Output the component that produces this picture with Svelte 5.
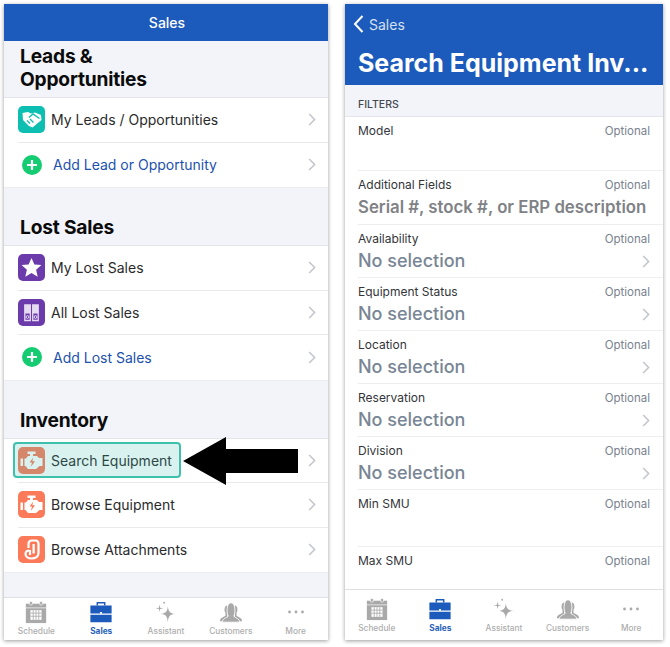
<script>
  const leads = [{ icon: 'shake', label: 'My Leads / Opportunities' }, { add: true, label: 'Add Lead or Opportunity' }];
  const lost = [
    { icon: 'star', label: 'My Lost Sales' },
    { icon: 'binders', label: 'All Lost Sales' },
    { add: true, label: 'Add Lost Sales' }
  ];
  const inventory = [
    { icon: 'engine', label: 'Search Equipment', marked: true },
    { icon: 'engine', label: 'Browse Equipment' },
    { icon: 'hook', label: 'Browse Attachments' }
  ];
  const filters = [
    { label: 'Model', cls: 'plain' },
    { label: 'Additional Fields', value: 'Serial #, stock #, or ERP description', cls: 'plain wide' },
    { label: 'Availability', value: 'No selection', pick: true },
    { label: 'Equipment Status', value: 'No selection', pick: true },
    { label: 'Location', value: 'No selection', pick: true },
    { label: 'Reservation', value: 'No selection', pick: true },
    { label: 'Division', value: 'No selection', pick: true },
    { label: 'Min SMU', cls: 'tall' },
    { label: 'Max SMU', cls: 'last' }
  ];
  const tabs = ['Schedule', 'Sales', 'Assistant', 'Customers', 'More'];
</script>

{#snippet chevron()}
  <svg class="chev" width="8" height="13" viewBox="0 0 8 13"><path d="M1.2 1 L6.6 6.5 L1.2 12" fill="none" stroke="#c3c6cc" stroke-width="1.6" /></svg>
{/snippet}

{#snippet appIcon(name)}
  <span class="app-icon {name}">
    <svg width="27" height="27" viewBox="0 0 27 27">
      {#if name === 'shake'}
        <path d="M4.5 7 L10 6 L13 7.5 L17 6.5 L23 9 L23.5 14 L14.5 21.5 L11 20 L5 14 Z" fill="#fff" />
        <path d="M11 11.5 L15 8 L21.5 12.5 M9 14.5 L12 17.5 M12 13 L15.5 16.5" fill="none" stroke="#0dbfb0" stroke-width="1.4" />
      {:else if name === 'star'}
        <path d="M13.5 4 L16.4 10.4 L23.4 11.1 L18.1 15.8 L19.7 22.8 L13.5 19.1 L7.3 22.8 L8.9 15.8 L3.6 11.1 L10.6 10.4 Z" fill="#fff" />
      {:else if name === 'binders'}
        <path d="M6.8 6 H12.3 V21.5 H6.8 Z M14.7 6 H20.2 V21.5 H14.7 Z" fill="none" stroke="#e6dcf2" stroke-width="1.3" />
        <path d="M6.8 6 H12.3 V14.5 H6.8 Z M14.7 6 H20.2 V14.5 H14.7 Z" fill="#e6dcf2" />
        <circle cx="9.5" cy="18" r="1.4" fill="none" stroke="#e6dcf2" />
        <circle cx="17.5" cy="18" r="1.4" fill="none" stroke="#e6dcf2" />
      {:else if name === 'engine'}
        <path d="M9.5 4.5 H17.5 V7 H15 V9 H19 L21 11 H24.5 V19 H21.5 L18 22 H10 L7.5 19 H6.5 V11.5 H8 L10 9 H12 V7 H9.5 Z" fill="#fff" />
        <path d="M2.5 11.5 H5 V19 H2.5 Z" fill="#fff" />
        <path d="M15.2 10.5 L11.5 15.5 H14 L12.8 20 L17 14.2 H14.3 Z" fill="currentColor" />
      {:else}
        <path d="M10.5 12 V8 C10.5 5.5 12 4.5 14 4.5 H17.5 C19.5 4.5 20.5 6 20.5 8 V17 C20.5 20.5 17.5 22.5 13.5 22.5 C10 22.5 7.5 20.5 7.5 18 C7.5 15.5 9.5 14 12 15 V19" fill="none" stroke="#fff" stroke-width="2.2" />
        <path d="M14.5 8 H16.8 V17.5 H14.5 Z" fill="#fff" />
      {/if}
    </svg>
  </span>
{/snippet}

{#snippet section(title, rows)}
  <h2>{title}</h2>
  <ul class="list">
    {#each rows as row}
      <li class="row">
        <div class="row-inner" class:is-add={row.add}>
          {#if row.add}
            <span class="plus"><svg width="20" height="20" viewBox="0 0 20 20"><circle cx="10" cy="10" r="10" fill="#16cc72" /><path d="M10 5 V15 M5 10 H15" stroke="#fff" stroke-width="2.2" /></svg></span>
          {:else}
            {@render appIcon(row.icon)}
          {/if}
          <span class="row-label">{row.label}</span>
          {@render chevron()}
        </div>
        {#if row.marked}
          <span class="mark"></span>
          <svg class="arrow" width="116" height="48" viewBox="0 0 116 48"><path d="M0 24 L43 0 V12 H115 V36 H43 V48 Z" fill="#000" /></svg>
        {/if}
      </li>
    {/each}
  </ul>
{/snippet}

{#snippet tabbar()}
  <nav class="tabs">
    {#each tabs as tab}
      <div class="tab" class:active={tab === 'Sales'}>
        <svg width="26" height="26" viewBox="0 0 26 26">
          {#if tab === 'Schedule'}
            <path d="M2 4 H24 V25 H2 Z" fill="#a9a9a9" />
            <rect x="6" y="1.5" width="3" height="4" rx="1.2" fill="#a9a9a9" stroke="#fff" stroke-width=".7" />
            <rect x="17" y="1.5" width="3" height="4" rx="1.2" fill="#a9a9a9" stroke="#fff" stroke-width=".7" />
            <path d="M2 8.5 H24" stroke="#fff" stroke-width=".7" />
            <path d="M7 11 H19 V21.5 H7 Z" fill="#fff" />
            <path d="M7 14.2 H19 M7 17.6 H19 M10 11 V21.5 M13 11 V21.5 M16 11 V21.5" stroke="#a9a9a9" stroke-width=".9" />
          {:else if tab === 'Sales'}
            <path d="M9 6 V3 H17 V6" fill="none" stroke="#1c5bbc" stroke-width="1.6" />
            <path d="M1.5 6 H24.5 V14.5 H1.5 Z M1.5 16 H24.5 V24 H1.5 Z" fill="#1c5bbc" />
            <rect x="12" y="13" width="2" height="2" fill="#fff" />
          {:else if tab === 'Assistant'}
            <path d="M15 7 C15.6 12.5 17.5 14.5 23 15 C17.5 15.6 15.6 17.5 15 24 C14.4 17.5 12.5 15.6 7 15 C12.5 14.5 14.4 12.5 15 7 Z" fill="#a9a9a9" />
            <path d="M6 5 L6.7 8.3 L10 9 L6.7 9.7 L6 13 L5.3 9.7 L2 9 L5.3 8.3 Z" fill="#a9a9a9" />
            <circle cx="11" cy="3" r="1" fill="#a9a9a9" />
          {:else if tab === 'Customers'}
            <path d="M1 23 C1 19 5 18.5 7 17 L7 14 C5.5 12 5.5 6 9 6 L9 20 L9 23 Z M25 23 C25 19 21 18.5 19 17 L19 14 C20.5 12 20.5 6 17 6 L17 23 Z" fill="#a9a9a9" />
            <path d="M3.5 24 C3.5 20 8.5 19.5 10 17.5 C8 14.5 8 3 13 3 C18 3 18 14.5 16 17.5 C17.5 19.5 22.5 20 22.5 24 Z" fill="#a9a9a9" stroke="#fff" stroke-width=".9" />
          {:else}
            <circle cx="6" cy="13" r="1.5" fill="#a9a9a9" />
            <circle cx="13" cy="13" r="1.5" fill="#a9a9a9" />
            <circle cx="20" cy="13" r="1.5" fill="#a9a9a9" />
          {/if}
        </svg>
        <span>{tab}</span>
      </div>
    {/each}
  </nav>
{/snippet}

<div class="page">
  <section class="phone">
    <header class="bar">Sales</header>
    <div class="body">
      <div class="group first">{@render section('Leads & Opportunities', leads)}</div>
      <div class="group">{@render section('Lost Sales', lost)}</div>
      <div class="group">{@render section('Inventory', inventory)}</div>
    </div>
    {@render tabbar()}
  </section>

  <section class="phone right">
    <header class="bar-large">
      <div class="back">
        <svg width="11" height="18" viewBox="0 0 11 18"><path d="M9.5 1 L2 9 L9.5 17" fill="none" stroke="#fff" stroke-width="2" /></svg>
        <span>Sales</span>
      </div>
      <h1>Search Equipment Inv...</h1>
    </header>
    <div class="body form">
      <div class="filters-title">FILTERS</div>
      <ul class="fields">
        {#each filters as f}
          <li class="field {f.cls ?? ''}">
            <div class="field-top"><span>{f.label}</span><span class="opt">Optional</span></div>
            {#if f.value}
              <div class="field-value"><span>{f.value}</span>{#if f.pick}{@render chevron()}{/if}</div>
            {/if}
          </li>
        {/each}
      </ul>
    </div>
    {@render tabbar()}
  </section>
</div>

<style>
  :global(body) {
    margin: 0;
    background: #fff;
  }

  ul {
    list-style: none;
    margin: 0;
    padding: 0;
  }

  .page {
    display: flex;
    gap: 17px;
    padding: 4px 7px 7px 4px;
    width: 670px;
    height: 647px;
    box-sizing: border-box;
    font-family: Inter, "Liberation Sans", sans-serif;
    overflow: hidden;
  }

  .phone {
    width: 324px;
    display: flex;
    flex-direction: column;
    background: #f2f4fa;
    box-shadow: 0 1px 4px rgba(0, 0, 0, 0.4);
  }

  .phone.right {
    width: 318px;
    background: #fff;
  }

  .bar {
    height: 37px;
    flex: none;
    background: #1c5bbc;
    color: #fff;
    font-size: 14px;
    font-weight: 500;
    display: flex;
    align-items: center;
    justify-content: center;
    padding-left: 2px;
  }

  .body {
    flex: 1;
    min-height: 0;
  }

  .group {
    padding-top: 28px;
  }

  .group.first {
    padding-top: 4px;
  }

  h2 {
    margin: 0;
    padding: 0 120px 6px 16px;
    font-size: 19.2px;
    line-height: 23px;
    font-weight: 700;
    color: #0b0b0b;
    letter-spacing: -0.2px;
  }

  .list {
    background: #fff;
    border-top: 1px solid #e4e5ea;
    border-bottom: 1px solid #ebecf0;
  }

  .row {
    position: relative;
    height: 44.5px;
    padding-left: 14px;
  }

  .row-inner {
    display: flex;
    align-items: center;
    height: 100%;
    box-sizing: border-box;
    border-bottom: 1px solid #eaeaec;
    padding-right: 12px;
  }

  .row:last-child .row-inner {
    border-bottom: none;
  }

  .app-icon {
    width: 27px;
    height: 27px;
    border-radius: 5px;
    flex: none;
    margin-right: 6px;
    display: block;
  }

  .app-icon svg {
    display: block;
  }

  .shake {
    background: #0dbfb0;
  }

  .star,
  .binders {
    background: #6c3bab;
  }

  .engine,
  .hook {
    background: #fb7a5a;
    color: #fb7a5a;
  }

  .plus {
    margin: 0 11px 0 4px;
    display: block;
    height: 20px;
  }

  .row-label {
    flex: 1;
    font-size: 14px;
    color: #2a2a2c;
    white-space: nowrap;
  }

  .is-add .row-label {
    color: #1c52ad;
  }

  .mark {
    position: absolute;
    left: 9px;
    top: 3px;
    width: 168px;
    height: 36px;
    box-sizing: border-box;
    border: 2.5px solid #3fc0ad;
    border-radius: 4px;
    background: rgba(63, 192, 173, 0.2);
  }

  .arrow {
    position: absolute;
    left: 179px;
    top: -2px;
  }

  .tabs {
    flex: none;
    height: 43px;
    margin-top: auto;
    background: #fff;
    border-top: 1px solid #dfe0e4;
    display: flex;
    box-sizing: border-box;
  }

  .right .tabs {
    height: 51px;
    padding-top: 5px;
  }

  .tab {
    flex: 1;
    display: flex;
    flex-direction: column;
    align-items: center;
    font-size: 8.3px;
    font-weight: 500;
    color: #aeaeae;
    padding-top: 2px;
  }

  .tab svg {
    display: block;
    height: 24px;
    margin-bottom: 2px;
  }

  .tab.active {
    color: #2a62b8;
    font-weight: 700;
  }

  .bar-large {
    height: 81px;
    flex: none;
    background: #1c5bbc;
    color: #fff;
    box-sizing: border-box;
    padding: 11px 13px 0 8px;
  }

  .back {
    display: flex;
    align-items: center;
    gap: 5px;
    font-size: 14px;
    color: #d5e0f2;
    height: 18px;
  }

  .bar-large h1 {
    margin: 11px 0 0 5px;
    font-size: 25px;
    line-height: 38px;
    font-weight: 700;
    white-space: nowrap;
  }

  .form {
    display: flex;
    flex-direction: column;
    min-height: 0;
  }

  .filters-title {
    height: 32px;
    flex: none;
    box-sizing: border-box;
    background: #f2f4fa;
    border-bottom: 1px solid #e4e5ea;
    padding: 13px 0 0 13px;
    font-size: 10.5px;
    line-height: 13px;
    font-weight: 500;
    color: #444850;
  }

  .field {
    height: 53px;
    box-sizing: border-box;
    margin-left: 13px;
    padding: 6px 13px 0 0;
    border-bottom: 1px solid #eeeef0;
  }

  .field.plain {
    height: 54px;
  }

  .field.tall {
    height: 57px;
  }

  .field.last {
    height: 42px;
    border-bottom: none;
  }

  .field-top {
    display: flex;
    justify-content: space-between;
    align-items: baseline;
    font-size: 12px;
    line-height: 15px;
    color: #33353a;
  }

  .opt {
    font-size: 11.5px;
    color: #79828f;
  }

  .field-value {
    display: flex;
    justify-content: space-between;
    align-items: center;
    font-size: 18px;
    line-height: 24px;
    font-weight: 500;
    color: #788595;
    margin-top: 2px;
  }

  .wide .field-value {
    font-size: 16.8px;
    color: #7f8286;
    font-weight: 600;
    white-space: nowrap;
  }

  .chev {
    flex: none;
  }
</style>
